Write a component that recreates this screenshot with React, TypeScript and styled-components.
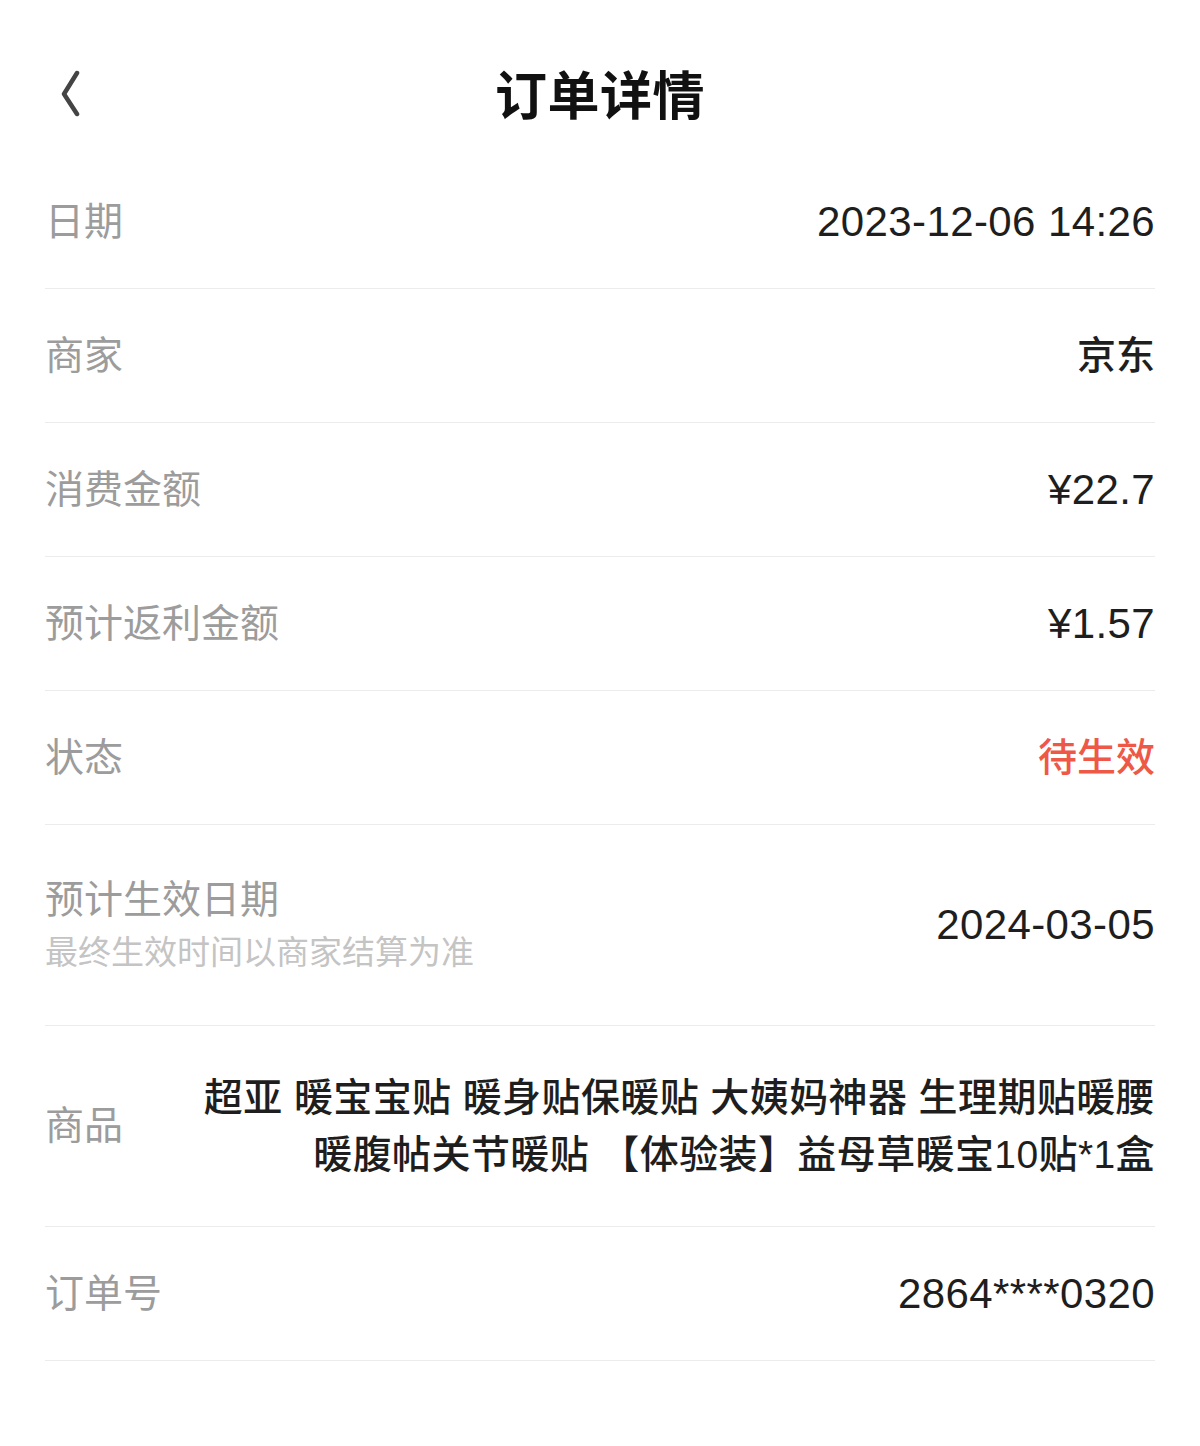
import styled, { createGlobalStyle } from 'styled-components';

const GlobalStyle = createGlobalStyle`
  html, body {
    margin: 0;
    padding: 0;
    background: #ffffff;
  }
  body {
    font-family: 'Liberation Sans', 'Noto Sans CJK SC', sans-serif;
    -webkit-font-smoothing: antialiased;
  }
`;

type Item = {
  label: string;
  value: string;
  numeric?: boolean;
  accent?: boolean;
};

const basicItems: Item[] = [
  { label: '日期', value: '2023-12-06 14:26', numeric: true },
  { label: '商家', value: '京东' },
  { label: '消费金额', value: '¥22.7', numeric: true },
  { label: '预计返利金额', value: '¥1.57', numeric: true },
  { label: '状态', value: '待生效', accent: true },
];

const productLines = [
  '超亚 暖宝宝贴 暖身贴保暖贴 大姨妈神器 生理期贴暖腰',
  '暖腹帖关节暖贴 【体验装】益母草暖宝10贴*1盒',
];

const BackIcon = () => (
  <svg width='24' height='48' viewBox='0 0 24 48' fill='none'>
    <path
      d='M18 4 L5 25 L18 45'
      stroke='#444'
      strokeWidth='4.5'
      strokeLinecap='round'
      strokeLinejoin='round'
    />
  </svg>
);

const App = () => {
  return (
    <>
      <GlobalStyle />
      <Page>
        <Header>
          <BackButton aria-label='返回'>
            <BackIcon />
          </BackButton>
          <Title>订单详情</Title>
          <span />
        </Header>

        <List>
          {basicItems.map((item) => (
            <Row key={item.label}>
              <Label>{item.label}</Label>
              <Value $numeric={item.numeric} $accent={item.accent}>
                {item.value}
              </Value>
            </Row>
          ))}

          <Row $tall>
            <LabelGroup>
              <Label>预计生效日期</Label>
              <Hint>最终生效时间以商家结算为准</Hint>
            </LabelGroup>
            <Value $numeric>2024-03-05</Value>
          </Row>

          <Row $tall>
            <Label>商品</Label>
            <Product>
              {productLines.map((line) => (
                <ProductLine key={line}>{line}</ProductLine>
              ))}
            </Product>
          </Row>

          <Row>
            <Label>订单号</Label>
            <Value $numeric>2864****0320</Value>
          </Row>
        </List>
      </Page>
    </>
  );
};

const Page = styled.div`
  width: 1200px;
  min-height: 1446px;
  box-sizing: border-box;
  padding: 0 45px;
  background: #fff;
`;

const Header = styled.div`
  display: grid;
  grid-template-columns: 1fr auto 1fr;
  align-items: center;
  height: 155px;
  padding-top: 30px;
  box-sizing: border-box;
`;

const BackButton = styled.button`
  display: flex;
  align-items: center;
  justify-self: start;
  margin-left: 14px;
  padding: 0;
  border: none;
  background: none;
  cursor: pointer;
`;

const Title = styled.h1`
  margin: 0;
  font-size: 52px;
  font-weight: 700;
  color: #111;
  letter-spacing: 0.5px;
`;

const List = styled.div`
  display: flex;
  flex-direction: column;
`;

const Row = styled.div<{ $tall?: boolean }>`
  display: flex;
  align-items: center;
  justify-content: space-between;
  gap: 40px;
  height: ${({ $tall }) => ($tall ? '201px' : '134px')};
  box-sizing: border-box;
  border-bottom: 1px solid #ececec;
`;

const LabelGroup = styled.div`
  display: flex;
  flex-direction: column;
  gap: 6px;
`;

const Label = styled.span`
  flex-shrink: 0;
  font-size: 39px;
  line-height: 50px;
  color: #9c9c9c;
`;

const Hint = styled.span`
  font-size: 33px;
  line-height: 44px;
  color: #c4c4c4;
`;

const Value = styled.span<{ $numeric?: boolean; $accent?: boolean }>`
  font-size: ${({ $numeric }) => ($numeric ? '42px' : '39px')};
  line-height: 50px;
  font-weight: 500;
  color: ${({ $accent }) => ($accent ? '#ee5847' : '#1e1e1e')};
  letter-spacing: ${({ $numeric }) => ($numeric ? '0.4px' : '0')};
  white-space: nowrap;
`;

const Product = styled.div`
  display: flex;
  flex-direction: column;
  align-items: flex-end;
  text-align: right;
`;

const ProductLine = styled.span`
  font-size: 39px;
  line-height: 57px;
  font-weight: 500;
  color: #1e1e1e;
  letter-spacing: 0.4px;
  white-space: nowrap;
`;

export default App;
